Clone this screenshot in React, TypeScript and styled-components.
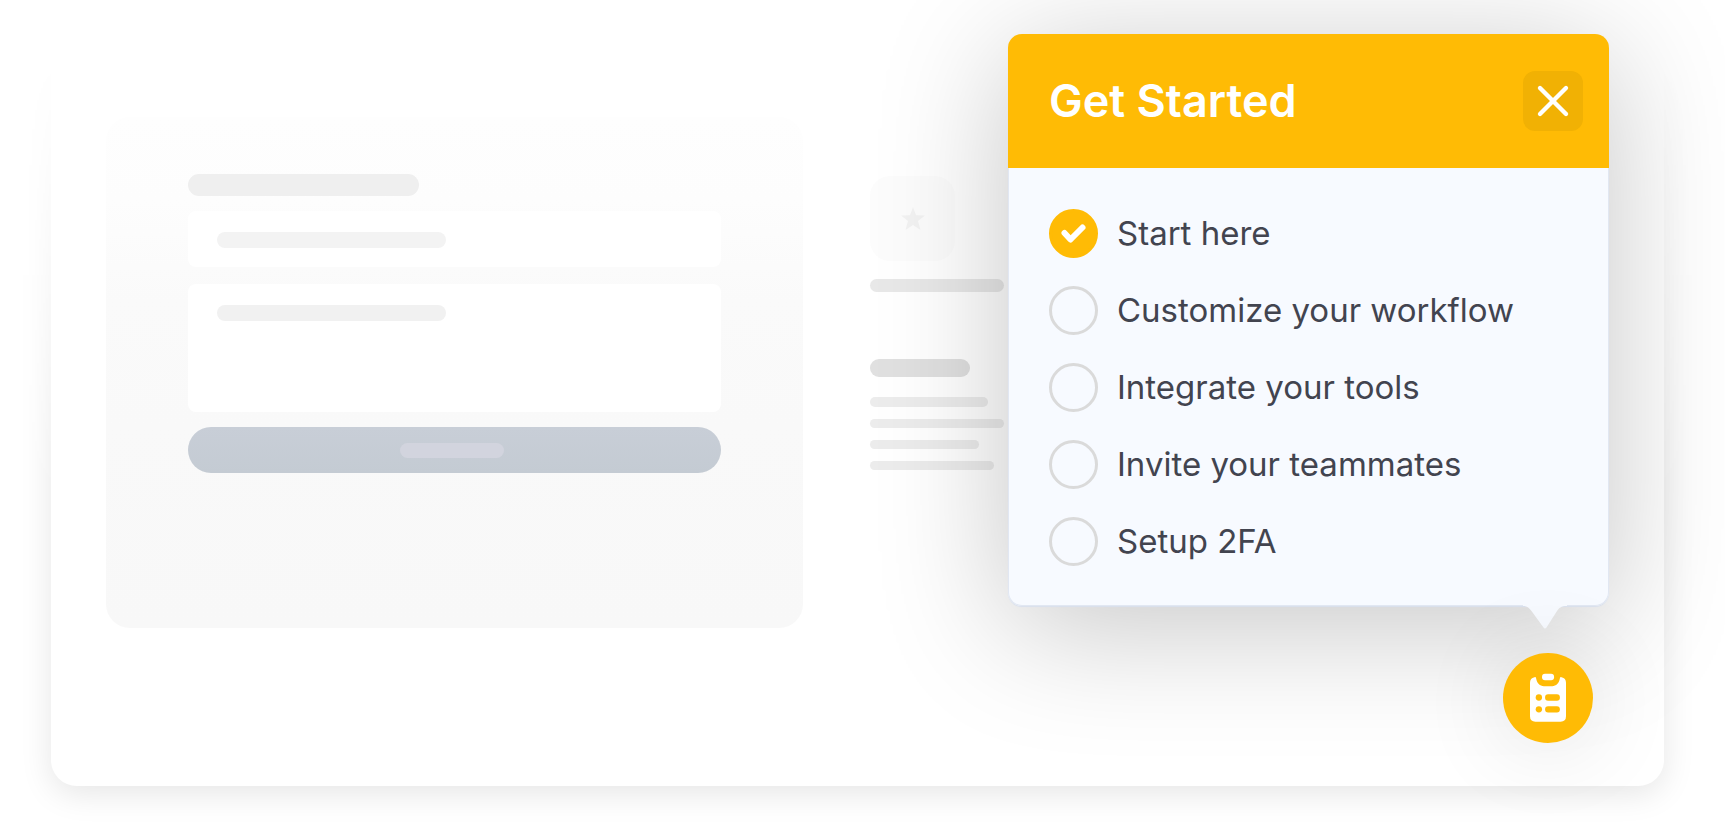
import React from "react";
import styled, { createGlobalStyle } from "styled-components";
import { X } from "lucide-react";

const amber = "#ffbb05";

const GlobalStyle = createGlobalStyle`
  *, *::before, *::after { box-sizing: border-box; }
  body { margin: 0; background: #fff; font-family: Inter, "Liberation Sans", sans-serif; }
`;

const Page = styled.div`
  min-height: 100vh;
  padding: 28px 61px 44px 51px;
  overflow: hidden;
`;

const Board = styled.main`
  position: relative;
  display: flex;
  align-items: flex-start;
  padding: 6px 55px 43px;
`;

const Backdrop = styled.div`
  position: absolute;
  inset: -60px;
  padding: 60px;
  mask-image: linear-gradient(to bottom, transparent 10%, #000 60%);

  &::after {
    content: "";
    display: block;
    height: 100%;
    border-radius: 26px;
    background: #fff;
    box-shadow: 0 8px 32px rgba(0, 0, 0, 0.1);
  }
`;

const FormPanel = styled.section`
  position: relative;
  flex: 1;
  display: flex;
  flex-direction: column;
  margin-top: 83px;
  height: 511px;
  padding: 57px 82px;
  border-radius: 24px;
  background: linear-gradient(to bottom, #fefefe 0%, #fdfdfd 16%, #fafafa 36%, #f9f9f9 60%, #f8f8f8 100%);
`;

const Bar = styled.div<{ $w: number; $h: number; $color: string }>`
  width: ${(p) => p.$w}px;
  height: ${(p) => p.$h}px;
  border-radius: ${(p) => p.$h / 2}px;
  background: ${(p) => p.$color};
`;

const Field = styled.div<{ $h: number; $gap: number }>`
  height: ${(p) => p.$h}px;
  margin-top: ${(p) => p.$gap}px;
  padding: 21px 29px;
  border-radius: 8px;
  background: #fff;
`;

const Submit = styled.div`
  display: flex;
  align-items: center;
  justify-content: center;
  height: 46px;
  margin-top: 15px;
  padding-right: 6px;
  border-radius: 23px;
  background: linear-gradient(to bottom, #c8ced7, #c4cbd3);
`;

const Aside = styled.section`
  position: relative;
  width: 134px;
  margin: 142px 4px 0 67px;
`;

const Tile = styled.div`
  display: flex;
  align-items: center;
  justify-content: center;
  width: 85px;
  height: 85px;
  margin-bottom: 18px;
  border-radius: 20px;
  background: rgba(120, 120, 120, 0.02);
`;

const Lines = styled.div`
  display: flex;
  flex-direction: column;
  gap: 12px;
  margin-top: 20px;
`;

const Spacer = styled.div`
  height: 67px;
`;

const Widget = styled.div`
  position: relative;
  display: flex;
  flex-direction: column;
  align-items: flex-end;
  gap: 47px;
  width: 601px;
`;

const Popup = styled.section`
  position: relative;
  width: 100%;
  border-radius: 14px;
  background: #f7faff;
  box-shadow:
    0 1px 1px 0 #d9e0ee,
    0 20px 130px rgba(0, 0, 0, 0.23);
`;

const Header = styled.header`
  display: flex;
  align-items: center;
  justify-content: space-between;
  height: 134px;
  padding: 0 26px 0 41px;
  border-radius: 14px 14px 0 0;
  background: ${amber};
`;

const Title = styled.h2`
  margin: 0;
  color: #fff;
  font-size: 45px;
  line-height: 56px;
  font-weight: 600;
`;

const CloseButton = styled.button`
  display: grid;
  place-items: center;
  width: 60px;
  height: 60px;
  padding: 0;
  border: 0;
  border-radius: 12px;
  background: #f1b104;
  color: #fff;
`;

const TaskList = styled.ul`
  display: flex;
  flex-direction: column;
  gap: 28px;
  margin: 0;
  padding: 41px 40px 39px;
  list-style: none;
  border: solid #e1e7f2;
  border-width: 0 1px 1px;
  border-radius: 0 0 14px 14px;
`;

const TaskLabel = styled.label`
  display: flex;
  align-items: center;
  gap: 19px;
  height: 49px;
  color: #42444f;
  font-size: 33px;
  line-height: 49px;
  white-space: nowrap;
`;

const CheckCell = styled.span`
  display: grid;
  width: 49px;
  height: 49px;

  & > * { grid-area: 1 / 1; }
  & > svg { pointer-events: none; }
`;

const Checkbox = styled.input`
  appearance: none;
  width: 49px;
  height: 49px;
  margin: 0;
  border: 3px solid #dadada;
  border-radius: 50%;

  &:checked { border-color: ${amber}; background: ${amber}; }
  & + svg { visibility: hidden; }
  &:checked + svg { visibility: visible; }
`;

const Tail = styled.svg`
  position: absolute;
  top: 100%;
  right: 42px;
  margin-top: -1px;
`;

const Launcher = styled.button`
  position: relative;
  display: grid;
  place-items: center;
  width: 90px;
  height: 90px;
  margin-right: 16px;
  padding: 0;
  border: 0;
  border-radius: 50%;
  background: ${amber};
  box-shadow: 0 4px 90px rgba(0, 0, 0, 0.12);
`;

const tasks = [
  { id: "start", text: "Start here", done: true },
  { id: "customize", text: "Customize your workflow", done: false },
  { id: "integrate", text: "Integrate your tools", done: false },
  { id: "invite", text: "Invite your teammates", done: false },
  { id: "setup", text: "Setup 2FA", done: false },
];

const ClipboardIcon = () => (
  <svg width="36" height="50" viewBox="0 0 36.500 50" aria-hidden="true">
    <path
      fill="#fff"
      d="M4.500 4Q6.200 3.200 6.300 5.500C7 10 10 13 14 13H22.500C26.500 13 29.500 10 30.200 5.500Q30.300 3.200 32 4Q36.500 5 36.500 9.500V43.500Q36.500 49 31 49H5.500Q0 49 0 43.500V9.500Q0 5 4.500 4Z"
    />
    <rect x="12.200" y="0.500" width="12.200" height="6.500" rx="3" fill="#fff" />
    <g fill={amber}>
      <circle cx="9" cy="24.500" r="3.200" />
      <rect x="15.300" y="21.300" width="15" height="6.400" rx="3" />
      <circle cx="9" cy="36.500" r="3.200" />
      <rect x="15.300" y="33.300" width="15" height="6.400" rx="3" />
    </g>
  </svg>
);

export default function App() {
  return (
    <>
      <GlobalStyle />
      <Page>
        <Board>
          <Backdrop />
          <FormPanel aria-hidden="true">
            <Bar $w={231} $h={22} $color="#efefef" />
            <Field $h={56} $gap={15}>
              <Bar $w={229} $h={16} $color="#f3f3f3" />
            </Field>
            <Field $h={128} $gap={17}>
              <Bar $w={229} $h={16} $color="#f1f1f1" />
            </Field>
            <Submit>
              <Bar $w={104} $h={15} $color="#d2d4de" />
            </Submit>
          </FormPanel>
          <Aside aria-hidden="true">
            <Tile>
              <svg width="24" height="24" viewBox="0 0 24 24">
                <path fill="#f2f2f2" d="M12 0l3 8.300 9 .2-7 5.500 2.500 9L12 18l-7.500 5L7 14 0 8.500l9-.2z" />
              </svg>
            </Tile>
            <Bar $w={134} $h={13} $color="#e8e8e8" />
            <Spacer />
            <Bar $w={100} $h={18} $color="#e0e0e0" />
            <Lines>
              <Bar $w={118} $h={10} $color="#ececec" />
              <Bar $w={134} $h={9} $color="#ececec" />
              <Bar $w={109} $h={9} $color="#ececec" />
              <Bar $w={124} $h={9} $color="#ececec" />
            </Lines>
          </Aside>
          <Widget>
            <Popup aria-labelledby="popup-title">
              <Header>
                <Title id="popup-title">Get Started</Title>
                <CloseButton type="button" aria-label="Close">
                  <X size={52} strokeWidth={2} />
                </CloseButton>
              </Header>
              <TaskList>
                {tasks.map((task) => (
                  <li key={task.id}>
                    <TaskLabel>
                      <CheckCell>
                        <Checkbox type="checkbox" defaultChecked={task.done} />
                        <svg width="49" height="49" viewBox="0 0 49 49" aria-hidden="true">
                          <path
                            d="M15.500 24L21.500 30.500L33.500 18.500"
                            fill="none"
                            stroke="#fff"
                            strokeWidth="6"
                            strokeLinecap="round"
                            strokeLinejoin="round"
                          />
                        </svg>
                      </CheckCell>
                      {task.text}
                    </TaskLabel>
                  </li>
                ))}
              </TaskList>
              <Tail width="44" height="24" viewBox="0 0 44 24" aria-hidden="true">
                <path fill="#f7faff" d="M0 0V1C4 1 6 3 8.500 6L20.500 22.500Q22 24.500 23.500 22.500L34 6C36 3 38 1 44 1V0Z" />
              </Tail>
            </Popup>
            <Launcher type="button" aria-label="Open checklist">
              <ClipboardIcon />
            </Launcher>
          </Widget>
        </Board>
      </Page>
    </>
  );
}
